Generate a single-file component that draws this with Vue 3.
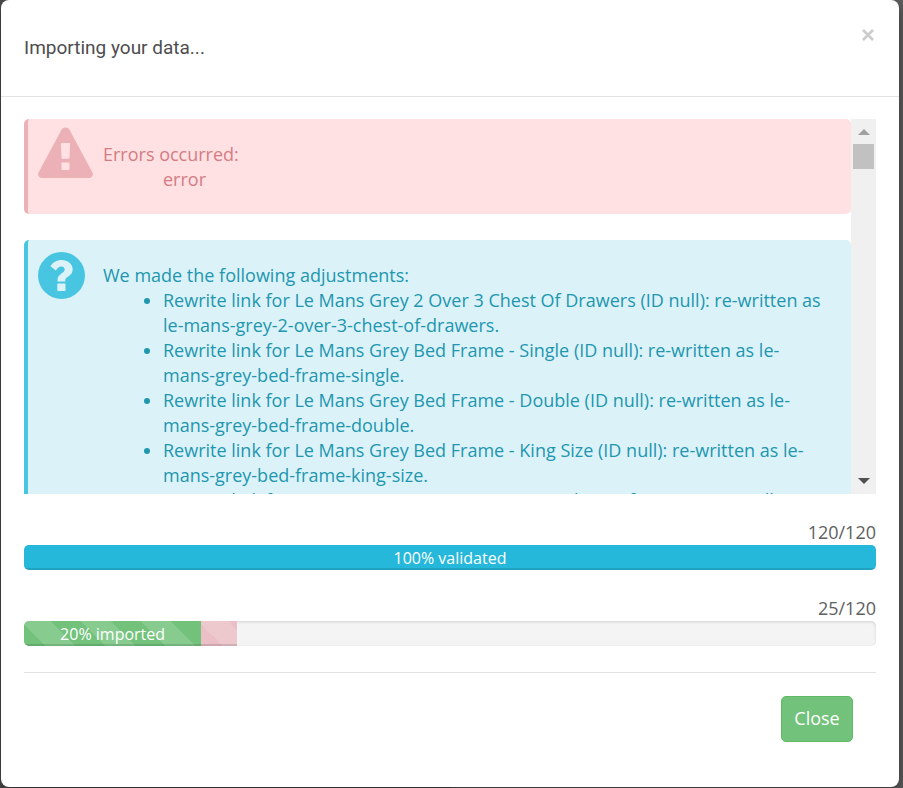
<script setup>
import { ref, computed } from 'vue'

const open = ref(true)

const errors = ['error']

const adjustments = [
  { name: 'Le Mans Grey 2 Over 3 Chest Of Drawers', link: 'le-mans-grey-2-over-3-chest-of-drawers' },
  { name: 'Le Mans Grey Bed Frame - Single', link: 'le-mans-grey-bed-frame-single' },
  { name: 'Le Mans Grey Bed Frame - Double', link: 'le-mans-grey-bed-frame-double' },
  { name: 'Le Mans Grey Bed Frame - King Size', link: 'le-mans-grey-bed-frame-king-size' },
  { name: 'Le Mans Grey 5 Drawer Narrow Chest Of Drawers', link: 'le-mans-grey-5-drawer-narrow-chest-of-drawers' }
]

const total = 120
const validated = 120
const imported = 25
const failed = 5

const validatedPercent = computed(() => Math.floor((validated / total) * 100))
const importedPercent = computed(() => Math.floor((imported / total) * 100))
const importedWidth = computed(() => ((imported / total) * 100).toFixed(1))
const failedWidth = computed(() => ((failed / total) * 100).toFixed(1))
</script>

<template>
  <div class="backdrop">
    <div v-if="open" class="modal" role="dialog" aria-labelledby="modal-title">
      <header class="modal-header">
        <h4 id="modal-title" class="modal-title">Importing your data...</h4>
        <button class="dismiss" type="button" aria-label="Dismiss" @click="open = false">
          <svg viewBox="0 0 12 12" width="12" height="12">
            <path d="M1 1 L11 11 M11 1 L1 11" stroke="currentColor" stroke-width="2.6" fill="none" />
          </svg>
        </button>
      </header>

      <div class="modal-body">
        <div class="log">
          <div class="log-content">
            <div class="callout danger">
              <svg class="icon" viewBox="0 0 56 52" width="56" height="52">
                <path
                  fill="currentColor"
                  fill-rule="evenodd"
                  d="M27.5 0.5 C29.3 0.5 30.7 1.4 31.5 2.8 L54.3 45.2 C56 48 54 51 51 51 H4 C1 51 -1 48 0.7 45.2 L23.5 2.8 C24.3 1.4 25.7 0.5 27.5 0.5 Z M23.8 16 C23.3 16 22.9 16.4 22.9 17 L23.5 30.8 C23.5 31.4 23.9 31.7 24.5 31.7 H30.5 C31.1 31.7 31.5 31.4 31.5 30.8 L32.1 17 C32.1 16.4 31.7 16 31.2 16 Z M24.5 35.5 C23.9 35.5 23.5 35.9 23.5 36.5 V42 C23.5 42.6 23.9 43 24.5 43 H30.5 C31.1 43 31.5 42.6 31.5 42 V36.5 C31.5 35.9 31.1 35.5 30.5 35.5 Z"
                />
              </svg>
              <div class="message">
                <p>Errors occurred:</p>
                <ul class="plain">
                  <li v-for="error in errors" :key="error">{{ error }}</li>
                </ul>
              </div>
            </div>

            <div class="callout info">
              <svg class="icon round" viewBox="0 0 48 48" width="48" height="48">
                <circle cx="23.5" cy="23.5" r="23.5" fill="currentColor" />
                <path
                  class="mark"
                  d="M12.500 14.200 C15 10.300 18.500 8 23.700 8 C29.500 8 34.700 12 34.700 17.300 C34.700 24.300 27.300 24.600 27.300 28 V29.500 H19.500 V28 C19.500 21.800 26.700 21.500 26.700 17.600 C26.700 15.700 25.200 14.600 23.300 14.600 C21.100 14.600 19.800 16 17.800 18.400 Z M20 31.500 H26.800 C27.200 31.500 27.500 31.800 27.500 32.200 V38.300 C27.500 38.700 27.200 39 26.800 39 H20 C19.600 39 19.300 38.700 19.300 38.300 V32.200 C19.300 31.800 19.600 31.500 20 31.500 Z"
                />
              </svg>
              <div class="message">
                <p>We made the following adjustments:</p>
                <ul>
                  <li v-for="item in adjustments" :key="item.link">
                    Rewrite link for {{ item.name }} (ID null): re-written as {{ item.link }}.
                  </li>
                </ul>
              </div>
            </div>
          </div>

          <div class="scrollbar" aria-hidden="true">
            <span class="arrow up"></span>
            <span class="thumb"></span>
            <span class="arrow down"></span>
          </div>
        </div>

        <div class="task">
          <div class="count">{{ validated }}/{{ total }}</div>
          <div class="progress">
            <div class="bar blue" :style="{ width: validatedPercent + '%' }">{{ validatedPercent }}% validated</div>
          </div>
        </div>

        <div class="task">
          <div class="count">{{ imported }}/{{ total }}</div>
          <div class="progress">
            <div class="bar green striped" :style="{ width: importedWidth + '%' }">{{ importedPercent }}% imported</div>
            <div class="bar pink striped" :style="{ width: failedWidth + '%' }"></div>
          </div>
        </div>

        <footer class="modal-footer">
          <button class="btn" type="button" @click="open = false">Close</button>
        </footer>
      </div>
    </div>
  </div>
</template>

<style>
body {
  background: #545454;
}
</style>

<style scoped>
.backdrop {
  min-height: 100vh;
  box-sizing: border-box;
  padding: 0 4px 1px 1px;
  background: linear-gradient(to right, #4c4c4d 50%, #606060 50%);
  color: #606062;
  font-family: "Open Sans", sans-serif;
  font-size: 18px;
  line-height: 25px;
}

.modal {
  background: #fff;
  border-radius: 8px;
  box-shadow: 0 6px 16px rgba(0, 0, 0, 0.5);
}

.modal-header {
  display: flex;
  justify-content: space-between;
  align-items: flex-start;
  padding: 23px;
  border-bottom: 1px solid #e2e2e2;
}

.modal-title {
  margin: 0;
  color: #4d4d4f;
  font-family: "Ubuntu Condensed", Roboto, sans-serif;
  font-size: 19px;
  font-weight: 400;
  line-height: 50px;
}

.dismiss {
  display: flex;
  padding: 6px 2px;
  border: none;
  background: transparent;
  color: #ccc;
  cursor: pointer;
}

.modal-body {
  padding: 22px 23px 45px;
}

.log {
  display: flex;
  height: 375px;
}

.log-content {
  flex: 1;
  overflow: hidden;
}

.callout {
  display: flex;
  align-items: flex-start;
  gap: 9px;
  margin-bottom: 26px;
  padding: 0 23px 22px 10px;
  border-left: 4px solid;
  border-radius: 5px;
}

.callout.danger {
  background: #ffe1e3;
  border-color: #ebb1b7;
}

.callout.info {
  background: #dcf2f9;
  border-color: #48c6e1;
}

.icon {
  flex: none;
  margin-top: 8px;
}

.icon.round {
  margin-top: 12px;
  margin-right: 8px;
}

.danger .icon {
  color: #ebb1b7;
}

.info .icon {
  color: #48c6e1;
}

.mark {
  fill: #dcf2f9;
}

.message {
  padding-top: 23px;
}

.danger .message {
  color: #d47c84;
}

.info .message {
  color: #2197af;
}

.message p {
  margin: 0;
}

.message ul {
  margin: 0;
  padding-left: 60px;
}

.message .plain {
  list-style: none;
}

.scrollbar {
  display: flex;
  flex-direction: column;
  align-items: center;
  flex: none;
  width: 25px;
  background: #f0f0f0;
}

.arrow {
  border: 6px solid transparent;
}

.arrow.up {
  margin: 4px 0 9px;
  border-bottom-color: #a0a0a0;
}

.arrow.down {
  margin: auto 0 4px;
  border-top-color: #505050;
}

.thumb {
  width: 21px;
  height: 25px;
  background: #c1c1c1;
}

.task {
  margin-top: 26px;
}

.count {
  text-align: right;
}

.progress {
  display: flex;
  height: 25px;
  overflow: hidden;
  background: #f4f4f4;
  border-radius: 5px;
  box-shadow: inset 0 1px 3px rgba(0, 0, 0, 0.15);
}

.bar {
  color: #fff;
  font-size: 16px;
  line-height: 26px;
  text-align: center;
  white-space: nowrap;
  box-shadow: inset 0 -2px 0 rgba(0, 0, 0, 0.12);
}

.blue {
  background-color: #26b8db;
}

.green {
  background-color: #72c27b;
}

.pink {
  background-color: #eabfc5;
}

.striped {
  background-image: linear-gradient(
    45deg,
    rgba(255, 255, 255, 0.15) 25%,
    transparent 25%,
    transparent 50%,
    rgba(255, 255, 255, 0.15) 50%,
    rgba(255, 255, 255, 0.15) 75%,
    transparent 75%
  );
  background-position: -3px 0;
  background-size: 60px 60px;
}

.modal-footer {
  display: flex;
  justify-content: flex-end;
  margin-top: 26px;
  padding: 23px 23px 0;
  border-top: 1px solid #e2e2e2;
}

.btn {
  min-width: 72px;
  padding: 9px 12px 11px;
  border: 1px solid #5fb969;
  border-radius: 5px;
  background: #72c27b;
  color: #fff;
  font: inherit;
  line-height: 24px;
  cursor: pointer;
}
</style>
